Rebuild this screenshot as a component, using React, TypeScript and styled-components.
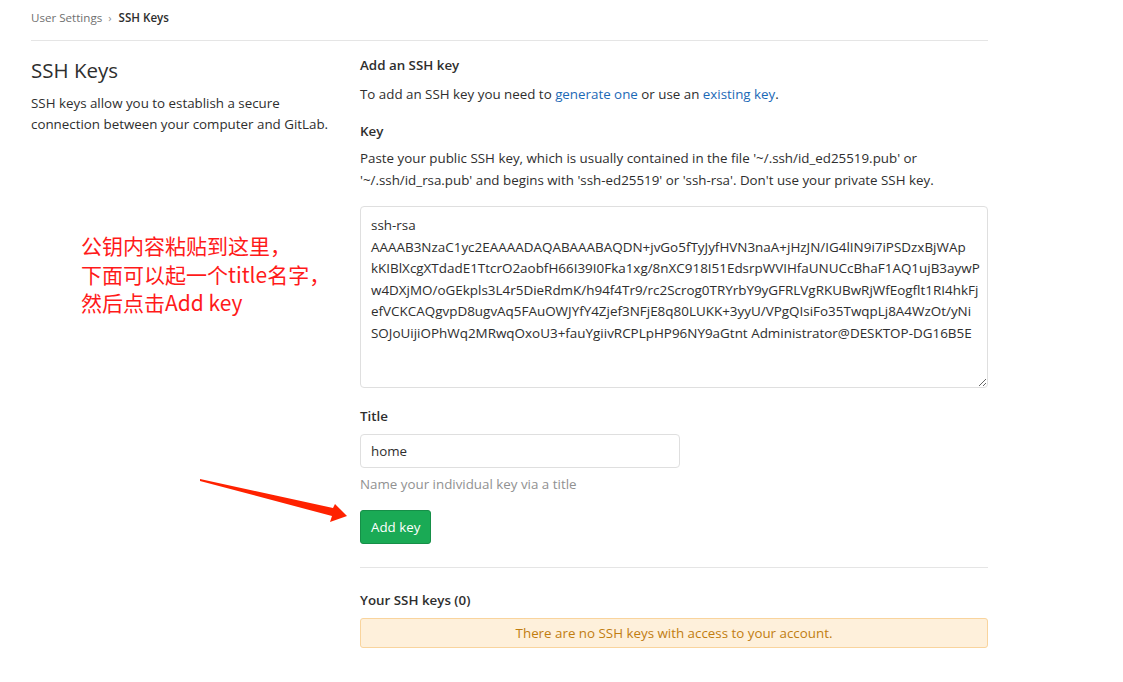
import React from 'react';
import styled, { createGlobalStyle } from 'styled-components';

const Global = createGlobalStyle`
  html, body { margin: 0; padding: 0; background: #fff; }
  body {
    font-family: "Open Sans", "Noto Sans", "Noto Sans CJK SC", sans-serif;
    font-size: 13.35px;
    color: #2e2e2e;
  }
  * { box-sizing: border-box; }
`;

const Page = styled.div`
  position: relative;
  width: 1123px;
  height: 682px;
  overflow: hidden;
`;

const Container = styled.div`
  width: 987px;
  margin-left: 16px;
`;

const Breadcrumbs = styled.div`
  display: flex;
  align-items: center;
  height: 41px;
  margin: 0 15px;
  border-bottom: 1px solid #e5e5e5;
  font-size: 11.6px;
  padding-bottom: 6px;
`;

const Crumb = styled.span<{ $active?: boolean }>`
  color: ${p => (p.$active ? '#2e2e2e' : '#707070')};
  font-weight: ${p => (p.$active ? 600 : 400)};
`;

const Chevron = styled.span`
  color: #909090;
  margin: 0 7px 0 6px;
  font-size: 11px;
`;

const Row = styled.div`
  display: flex;
`;

const Side = styled.div`
  width: 329px;
  padding: 16px 15px 0;
`;

const Main = styled.div`
  width: 658px;
  padding: 14px 15px 0;
`;

const Title = styled.h4`
  margin: 0;
  font-size: 20.5px;
  line-height: 26px;
  font-weight: 400;
  color: #2e2e2e;
`;

const Lead = styled.p`
  margin: 10px 0 0;
  line-height: 21px;
`;

const Heading = styled.h5<{ $top?: number }>`
  margin: ${p => p.$top ?? 0}px 0 0;
  font-size: 13.35px;
  line-height: 20px;
  font-weight: 600;
`;

const Text = styled.p<{ $top?: number }>`
  margin: ${p => p.$top ?? 0}px 0 0;
  line-height: 22px;
`;

const Link = styled.a`
  color: #1b69b6;
  text-decoration: none;
`;

const KeyArea = styled.textarea`
  display: block;
  width: 628px;
  height: 182px;
  margin-top: 15px;
  padding: 8px 4px 8px 10px;
  border: 1px solid #dfdfdf;
  border-radius: 4px;
  font-family: inherit;
  font-size: 13.45px;
  line-height: 21.6px;
  color: #2e2e2e;
  resize: vertical;
  outline: none;
  white-space: pre;
  overflow: hidden;
`;

const TitleInput = styled.input`
  display: block;
  width: 320px;
  height: 34px;
  margin-top: 8px;
  padding: 0 10px;
  border: 1px solid #dfdfdf;
  border-radius: 4px;
  font-family: inherit;
  font-size: 13.35px;
  color: #2e2e2e;
  outline: none;
`;

const Help = styled.div`
  margin-top: 6px;
  line-height: 20px;
  color: #919191;
`;

const Button = styled.button`
  display: block;
  margin-top: 16px;
  height: 34px;
  padding: 0 10px;
  background: #1aaa55;
  border: 1px solid #168f48;
  border-radius: 3px;
  color: #fff;
  font-family: inherit;
  font-size: 13.35px;
`;

const Divider = styled.hr`
  margin: 23px 0 0;
  border: 0;
  border-top: 1px solid #e5e5e5;
`;

const Warning = styled.div`
  margin-top: 8px;
  height: 30px;
  display: flex;
  align-items: center;
  justify-content: center;
  background: #fef0db;
  border: 1px solid #f9d49d;
  border-radius: 3px;
  color: #c17d10;
`;

const Note = styled.div`
  position: absolute;
  left: 81px;
  top: 231px;
  font-family: "Noto Sans CJK SC", sans-serif;
  font-size: 21px;
  line-height: 28.5px;
  color: #ff1a1a;
`;

const Arrow = styled.svg`
  position: absolute;
  left: 0;
  top: 0;
`;

const keyText = [
  'ssh-rsa',
  'AAAAB3NzaC1yc2EAAAADAQABAAABAQDN+jvGo5fTyJyfHVN3naA+jHzJN/IG4lIN9i7iPSDzxBjWAp',
  'kKIBlXcgXTdadE1TtcrO2aobfH66I39I0Fka1xg/8nXC918I51EdsrpWVIHfaUNUCcBhaF1AQ1ujB3aywP',
  'w4DXjMO/oGEkpls3L4r5DieRdmK/h94f4Tr9/rc2Scrog0TRYrbY9yGFRLVgRKUBwRjWfEogflt1RI4hkFj',
  'efVCKCAQgvpD8ugvAq5FAuOWJYfY4Zjef3NFjE8q80LUKK+3yyU/VPgQIsiFo35TwqpLj8A4WzOt/yNi',
  'SOJoUijiOPhWq2MRwqOxoU3+fauYgiivRCPLpHP96NY9aGtnt Administrator@DESKTOP-DG16B5E',
].join('\n');

export default function App() {
  return (
    <Page>
      <Global />
      <Container>
        <Breadcrumbs>
          <Crumb>User Settings</Crumb>
          <Chevron>›</Chevron>
          <Crumb $active>SSH Keys</Crumb>
        </Breadcrumbs>
        <Row>
          <Side>
            <Title>SSH Keys</Title>
            <Lead>
              SSH keys allow you to establish a secure connection between your computer and GitLab.
            </Lead>
          </Side>
          <Main>
            <Heading>Add an SSH key</Heading>
            <Text $top={8}>
              To add an SSH key you need to <Link href="#">generate one</Link> or use an{' '}
              <Link href="#">existing key</Link>.
            </Text>
            <Heading $top={16}>Key</Heading>
            <Text $top={6}>
              Paste your public SSH key, which is usually contained in the file '~/.ssh/id_ed25519.pub' or
              '~/.ssh/id_rsa.pub' and begins with 'ssh-ed25519' or 'ssh-rsa'. Don't use your private SSH key.
            </Text>
            <KeyArea defaultValue={keyText} spellCheck={false} wrap="off" />
            <Heading $top={18}>Title</Heading>
            <TitleInput defaultValue="home" />
            <Help>Name your individual key via a title</Help>
            <Button>Add key</Button>
            <Divider />
            <Heading $top={22}>Your SSH keys (0)</Heading>
            <Warning>There are no SSH keys with access to your account.</Warning>
          </Main>
        </Row>
      </Container>
      <Note>
        公钥内容粘贴到这里，
        <br />
        下面可以起一个title名字，
        <br />
        然后点击Add key
      </Note>
      <Arrow width="1123" height="682" viewBox="0 0 1123 682">
        <polygon points="200,479 333,508 335,504 347,516 330,522 332,516 200,481" fill="#ff2200" />
      </Arrow>
    </Page>
  );
}
